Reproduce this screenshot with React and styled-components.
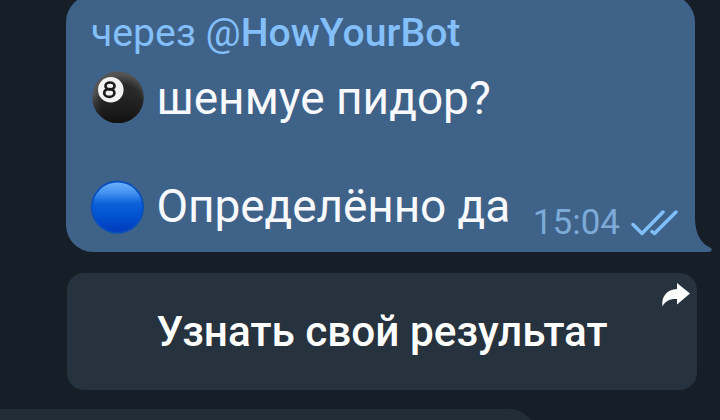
import React from 'react'
import styled, { createGlobalStyle } from 'styled-components'

const GlobalStyle = createGlobalStyle`
body {
  margin: 0;
  background: #161f27;
  overflow: hidden;
}
`
const Chat = styled.main`
display: flex;
flex-direction: column;
align-items: flex-start;
box-sizing: border-box;
height: 420px;
padding-left: 66px;
overflow: hidden;
font-family: Roboto, "Noto Sans", sans-serif;
`
const Bubble = styled.section`
position: relative;
box-sizing: border-box;
flex: none;
width: 629px;
height: 257px;
margin-top: -5px;
padding: 16px 17px 0 25px;
border-radius: 27px 27px 0 27px;
background: #3f6289;
`
const Tail = styled.svg`
position: absolute;
left: 628px;
bottom: 0;
`
const Via = styled.div`
height: 60px;
line-height: 45px;
font-size: 39.2px;
color: #83bffb;
white-space: nowrap;
`
const BotName = styled.span`
font-weight: 500;
`
const Line = styled.div`
display: flex;
height: 54px;
line-height: 54px;
font-size: 46px;
letter-spacing: ${props => props.$spacing || '0'};
color: #f7f9ff;
white-space: nowrap;
`
const Emoji = styled.svg`
flex: none;
width: 54px;
height: 54px;
margin-right: 11.5px;
overflow: visible;
`
const Meta = styled.div`
display: flex;
align-items: flex-end;
margin-left: auto;
height: 65px;
line-height: 42px;
font-size: 35px;
letter-spacing: 0;
color: #7dabd8;
`
const Checks = styled.svg`
margin: 0 0 8px 11px;
`
const BotButton = styled.button`
position: relative;
flex: none;
width: 630px;
height: 117px;
margin: 21px 0 0 1px;
padding: 0;
border: 0;
border-radius: 17px;
background: #26323d;
color: #fff;
font-family: inherit;
font-weight: 500;
font-size: 42.3px;
line-height: 117px;
white-space: nowrap;
`
const Share = styled.svg`
position: absolute;
right: 6px;
top: 9px;
`
const NextMessage = styled.div`
flex: none;
width: 546px;
height: 60px;
margin: 19px 0 0 -76px;
border-radius: 0 27px 27px 0;
background: #222d38;
`

function EightBall() {
  return (
    <Emoji viewBox="0 0 54 54">
      <defs>
        <radialGradient id="ball" cx="58%" cy="65%" r="60%">
          <stop offset="0" stopColor="#242424" />
          <stop offset="0.65" stopColor="#292929" />
          <stop offset="1" stopColor="#555" />
        </radialGradient>
        <linearGradient id="shade" x1="0" y1="0" x2="0" y2="1">
          <stop offset="0.45" stopColor="#151515" stopOpacity="0" />
          <stop offset="1" stopColor="#111" />
        </linearGradient>
      </defs>
      <circle cx="27" cy="26.3" r="25.8" fill="url(#ball)" />
      <circle cx="27" cy="26.3" r="25.8" fill="url(#shade)" />
      <circle cx="19.8" cy="18.8" r="12.8" fill="#f2f2f2" />
      <g fill="none" stroke="#1c1c1c" strokeWidth="2.7">
        <ellipse cx="19" cy="14.9" rx="4.5" ry="3.4" />
        <ellipse cx="18.3" cy="21.9" rx="5.1" ry="3.9" />
      </g>
    </Emoji>
  )
}

function BlueCircle() {
  return (
    <Emoji viewBox="0 0 54 54">
      <defs>
        <linearGradient id="blue" x1="0" y1="0" x2="0" y2="1">
          <stop offset="0" stopColor="#6cb0fa" />
          <stop offset="0.2" stopColor="#4594f2" />
          <stop offset="0.42" stopColor="#0c62da" />
          <stop offset="0.7" stopColor="#0050d0" />
          <stop offset="1" stopColor="#003bbd" />
        </linearGradient>
      </defs>
      <circle cx="26.5" cy="28.2" r="26.6" fill="#0a50bd" />
      <circle cx="26.5" cy="28.2" r="24.8" fill="url(#blue)" />
    </Emoji>
  )
}

export default function App() {
  return (
    <>
      <GlobalStyle />
      <Chat>
        <Bubble>
          <Via>через @<BotName>HowYourBot</BotName></Via>
          <Line><EightBall />шенмуе пидор?</Line>
          <Line />
          <Line $spacing="-0.1px">
            <BlueCircle />Определённо да
            <Meta>
              15:04
              <Checks width="47" height="26" viewBox="0 0 47 26" fill="none" stroke="#80bffb" strokeWidth="3.5" strokeLinecap="round" strokeLinejoin="round">
                <path d="M2 14.5L11 23.5L32 2" />
                <path d="M21 21.5L23.5 23.5L45 2" />
              </Checks>
            </Meta>
          </Line>
          <Tail width="18" height="34" viewBox="0 0 18 34">
            <path d="M0 0H1C1 15 7 26 16 29.5C19 31 18 34 14 34H0Z" fill="#3f6289" />
          </Tail>
        </Bubble>
        <BotButton>
          Узнать свой результат
          <Share width="30" height="27" viewBox="0 0 30 27">
            <path d="M16 1L29 11.5L16 22.5V17C9 16.5 4 19 1.5 24.5C0 14.5 6 7.5 16 7Z" fill="#fff" />
          </Share>
        </BotButton>
        <NextMessage />
      </Chat>
    </>
  )
}
